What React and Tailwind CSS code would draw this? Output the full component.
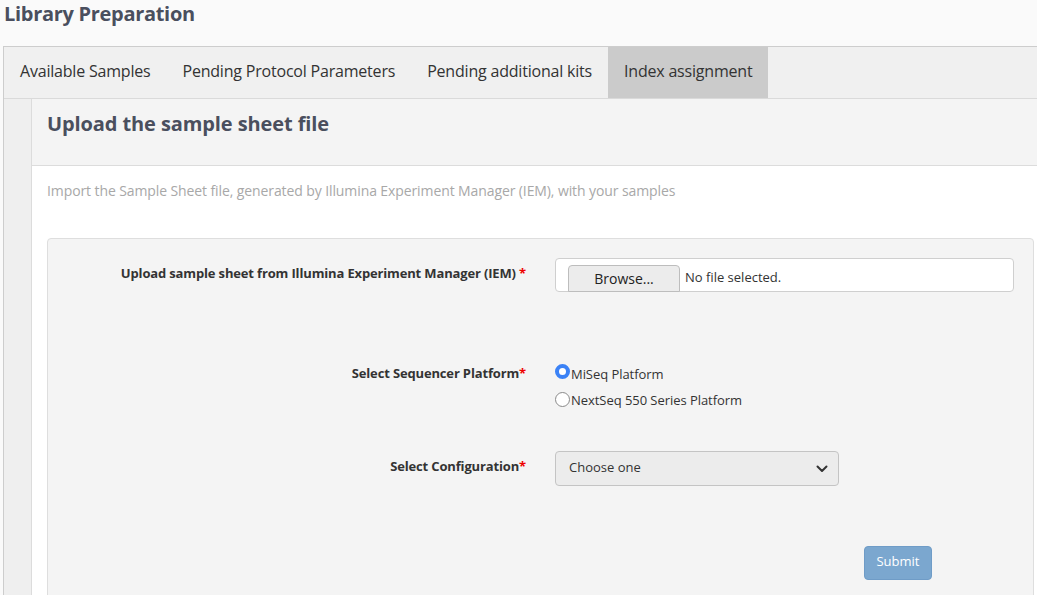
import React from "react";

function Radio({ checked, label }) {
  return (
    <div className="flex items-center h-[26px]">
      {checked ? (
        <span className="w-[15px] h-[15px] rounded-full border-[4px] border-[#3b82f6] bg-white box-border shrink-0 -mt-[7px]" />
      ) : (
        <span className="w-[15px] h-[15px] rounded-full border border-[#8a8a8a] bg-white box-border shrink-0 -mt-[4px]" />
      )}
      <span className="text-[13px] text-[#333] ml-[1px] tracking-[-0.05px]">{label}</span>
    </div>
  );
}

export default function App() {
  const tabs = ["Available Samples", "Pending Protocol Parameters", "Pending additional kits", "Index assignment"];
  return (
    <div
      className="w-[1037px] h-[595px] overflow-hidden bg-[#fafafa]"
      style={{ fontFamily: '"Open Sans", "Noto Sans", sans-serif' }}
    >
      <div className="h-[46px] pl-[4px] pt-[1px]">
        <h1 className="text-[20px] leading-[26px] font-bold tracking-[-0.3px] text-[#4a4f5e]">Library Preparation</h1>
      </div>
      <div className="ml-[3px] w-[1070px] border border-[#cdcdcd] bg-[#efefef] h-[600px]">
        <div className="flex h-[52px] border-b border-[#dadada] bg-[#f0f0f0]">
          {tabs.map((t, i) => (
            <div
              key={t}
              className={
                "px-4 flex items-center pb-[3px] text-[16px] tracking-[-0.2px] text-[#333] " +
                (i === 3 ? "bg-[#cbcbcb]" : "")
              }
            >
              {t}
            </div>
          ))}
        </div>
        <div className="pl-[27px]">
          <div className="border-l border-[#dcdcdc] bg-white h-[600px]">
            <div className="h-[67px] bg-[#f4f4f4] border-b border-[#dcdcdc] pl-[15px] pt-[12px]">
              <h2 className="text-[20px] leading-[26px] font-bold tracking-[-0.1px] text-[#4a4f5e]">Upload the sample sheet file</h2>
            </div>
            <p className="pl-[15px] pt-[15px] text-[14px] leading-[20px] tracking-[-0.1px] text-[#a8a8a8]">
              Import the Sample Sheet file, generated by Illumina Experiment Manager (IEM), with your samples
            </p>
            <div className="ml-[15px] mt-[37px] w-[987px] h-[400px] bg-[#f4f4f4] border border-[#dedede] rounded-[4px] pt-[19px]">
              <div className="flex items-center">
                <div className="w-[478px] text-right text-[13px] font-bold tracking-[-0.15px] text-[#333] -mt-[2px]">
                  Upload sample sheet from Illumina Experiment Manager (IEM) <span className="text-[#e00]">*</span>
                </div>
                <div className="ml-[29px] w-[459px] h-[34px] bg-white border border-[#cfcfcf] rounded-[4px] flex items-end pl-[12px]">
                  <div className="w-[112px] h-[27px] bg-[#ececec] border border-[#bdbdbd] rounded-t-[4px] flex items-center justify-center text-[14px] text-[#222] -mb-[1px]">
                    Browse...
                  </div>
                  <span className="ml-[5px] self-center mt-[6px] text-[13px] text-[#333]">No file selected.</span>
                </div>
              </div>
              <div className="flex mt-[70px]">
                <div className="w-[478px] text-right text-[13px] font-bold tracking-[-0.15px] text-[#333] pt-[2px]">
                  Select Sequencer Platform<span className="text-[#e00]">*</span>
                </div>
                <div className="ml-[29px] flex flex-col">
                  <Radio checked label="MiSeq Platform" />
                  <Radio label="NextSeq 550 Series Platform" />
                </div>
              </div>
              <div className="flex items-center mt-[37px]">
                <div className="w-[478px] text-right text-[13px] font-bold tracking-[-0.15px] text-[#333] -mt-[4px]">
                  Select Configuration<span className="text-[#e00]">*</span>
                </div>
                <div className="ml-[29px] w-[284px] h-[35px] bg-[#ececec] border border-[#c4c4c4] rounded-[4px] flex items-center justify-between pl-[13px] pr-[10px]">
                  <span className="text-[13px] text-[#333] -mt-[2px]">Choose one</span>
                  <svg width="12" height="8" viewBox="0 0 12 8" fill="none">
                    <path d="M1.5 1.5 L6 6 L10.5 1.5" stroke="#333" strokeWidth="2" strokeLinecap="round" strokeLinejoin="round" />
                  </svg>
                </div>
              </div>
              <div className="flex mt-[60px] pl-[816px]">
                <div className="w-[68px] h-[34px] rounded-[4px] bg-[#7ba7cf] border border-[#6f9cc7] flex items-center justify-center text-[13px] text-white pb-[2px]">
                  Submit
                </div>
              </div>
            </div>
          </div>
        </div>
      </div>
    </div>
  );
}
